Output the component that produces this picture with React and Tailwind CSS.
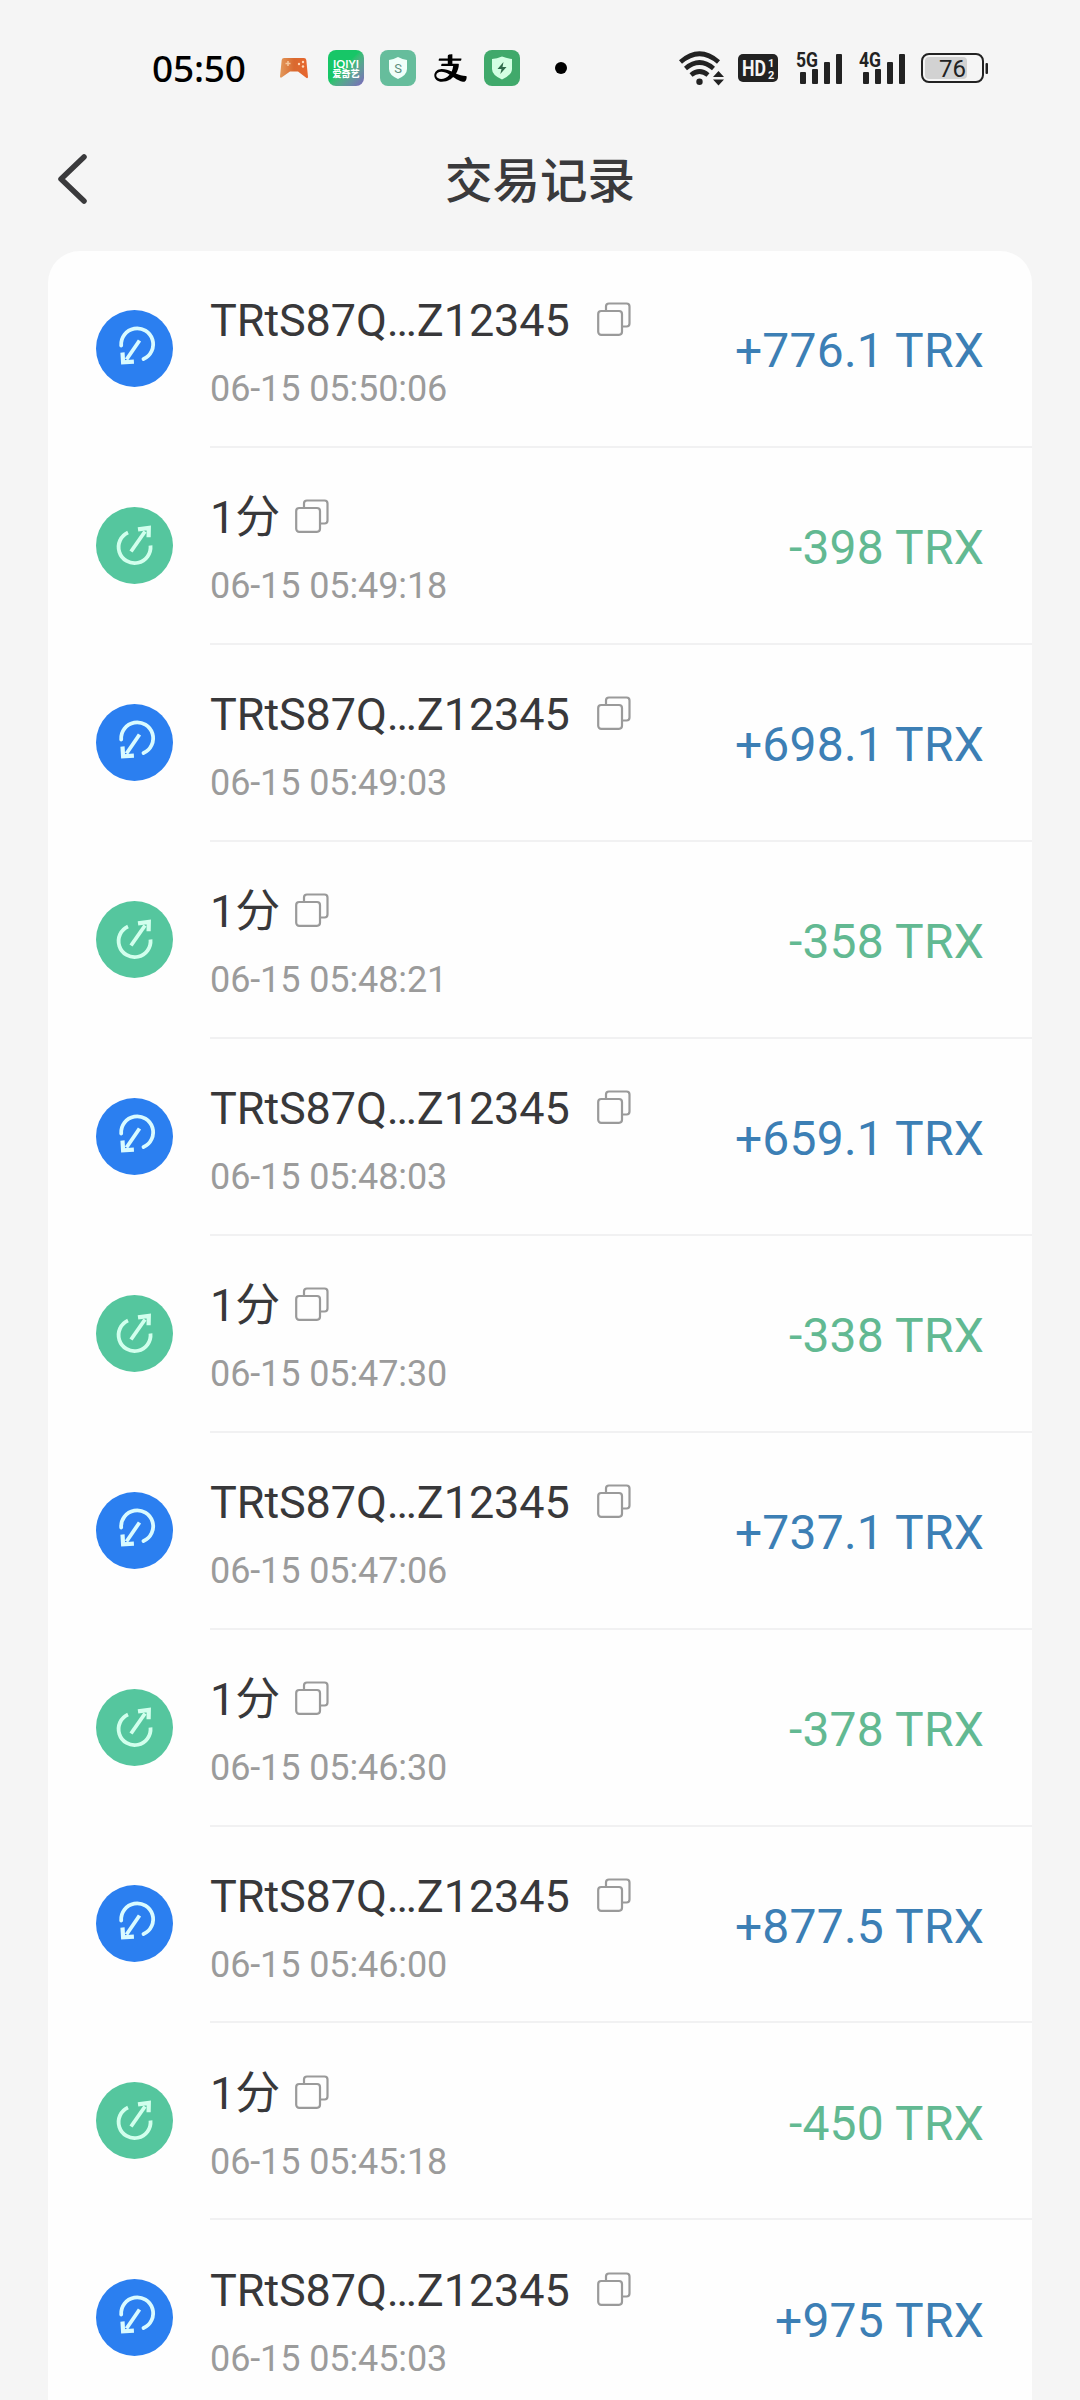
import React from 'react';
import { AiOutlineAlipay } from 'react-icons/ai';

const ADDRESS = 'TRtS87Q…Z12345';

const transactions = [
  { name: ADDRESS, time: '06-15 05:50:06', amount: '+776.1 TRX', type: 'in' },
  { name: '1分', time: '06-15 05:49:18', amount: '-398 TRX', type: 'out' },
  { name: ADDRESS, time: '06-15 05:49:03', amount: '+698.1 TRX', type: 'in' },
  { name: '1分', time: '06-15 05:48:21', amount: '-358 TRX', type: 'out' },
  { name: ADDRESS, time: '06-15 05:48:03', amount: '+659.1 TRX', type: 'in' },
  { name: '1分', time: '06-15 05:47:30', amount: '-338 TRX', type: 'out' },
  { name: ADDRESS, time: '06-15 05:47:06', amount: '+737.1 TRX', type: 'in' },
  { name: '1分', time: '06-15 05:46:30', amount: '-378 TRX', type: 'out' },
  { name: ADDRESS, time: '06-15 05:46:00', amount: '+877.5 TRX', type: 'in' },
  { name: '1分', time: '06-15 05:45:18', amount: '-450 TRX', type: 'out' },
  { name: ADDRESS, time: '06-15 05:45:03', amount: '+975 TRX', type: 'in' },
];

const GamepadIcon = () => (
  <svg width="28" height="22" viewBox="0 0 28 22" className="ml-[35px]">
    <defs>
      <linearGradient id="pad" x1="0" y1="0" x2="1" y2="0">
        <stop offset="0" stopColor="#e39a5c" />
        <stop offset="0.5" stopColor="#d9692f" />
        <stop offset="1" stopColor="#e8672f" />
      </linearGradient>
    </defs>
    <path d="M4 1h20q2 0 2.300 2L28 20q0 1.500-1.500 1L18 14.500h-8L1.500 20.500q-1.500.5-1.500-1L1.700 3Q2 1 4 1z" fill="url(#pad)" />
    <path d="M8 4v5M5.500 6.500h5" stroke="#f6c79c" strokeWidth="1.500" />
    <circle cx="19" cy="7" r="1.200" fill="#ffd9b8" />
    <circle cx="23" cy="5" r="1.200" fill="#ffd9b8" />
    <circle cx="23" cy="9.500" r="1.200" fill="#ffd9b8" />
  </svg>
);

const IqiyiIcon = () => (
  <div className="ml-[20px] flex h-9 w-9 flex-col items-center justify-center rounded-[8px] bg-linear-to-br from-[#17c667] from-45% to-[#7a63bd] text-white">
    <span className="font-['Lato'] text-[11px] leading-[11px] font-bold">IQIYI</span>
    <span className="font-['Noto_Sans_CJK_SC'] text-[9px] leading-[10px] font-black">爱奇艺</span>
  </div>
);

const ShieldMoneyIcon = () => (
  <svg width="36" height="36" viewBox="0 0 36 36" className="ml-4">
    <rect width="36" height="36" rx="8" fill="#66bd9c" />
    <path d="M18 7q4.500 2.500 9 3v9q0 6-9 10q-9-4-9-10v-9q4.500-.5 9-3z" fill="#f1fffa" />
    <text x="18" y="23" textAnchor="middle" fontSize="13" fontFamily="Roboto, sans-serif" fill="#5f8f7f">S</text>
  </svg>
);

const ShieldBoltIcon = () => (
  <svg width="36" height="36" viewBox="0 0 36 36" className="ml-[15px]">
    <rect width="36" height="36" rx="8" fill="#40a96b" />
    <path d="M18 6.500q5 2 10 2.500v10q0 6-10 10.500q-10-4.500-10-10.500v-10q5-.5 10-2.500z" fill="#d3ffe3" />
    <path d="M19.500 12l-6 7h4l-1.200 5 6.200-7h-4z" fill="#2f6b4b" />
  </svg>
);

const WifiIcon = () => (
  <svg width="45" height="35" viewBox="0 0 45 35" className="ml-[112px]">
    <g fill="none" stroke="#222" strokeWidth="4.600">
      <path d="M1.500 11Q20.500-5.500 39.500 11" />
      <path d="M6.500 17.500Q20.500 5.500 34.500 17.500" />
      <path d="M12 24Q20.500 17 29 24" />
    </g>
    <circle cx="20.500" cy="30.800" r="3.200" fill="#222" />
    <path d="M34 26l5.500-6 5.500 6zM34 28.500h11l-5.500 6z" fill="#222" />
  </svg>
);

const HdIcon = () => (
  <svg width="40" height="28" viewBox="0 0 40 28" className="ml-[14px]">
    <rect width="40" height="28" rx="5" fill="#222" />
    <g fill="#f5f5f5" fontFamily="Roboto, sans-serif" fontWeight="700">
      <text x="4" y="22" fontSize="22" textLength="24" lengthAdjust="spacingAndGlyphs">HD</text>
      <text x="30" y="12.500" fontSize="11">1</text>
      <text x="30" y="25" fontSize="11">2</text>
    </g>
  </svg>
);

const SignalIcon = ({ label, className }) => (
  <svg width="47" height="38" viewBox="0 0 47 38" className={className}>
    <text x="0" y="18" fontSize="20" fontFamily="Roboto, sans-serif" fontWeight="700" fill="#222" textLength="22" lengthAdjust="spacingAndGlyphs">{label}</text>
    <g fill="#222">
      <rect x="4" y="23" width="6" height="12" rx="1" />
      <rect x="16" y="20" width="6" height="15" rx="1" />
      <rect x="28" y="13" width="6" height="22" rx="1" />
      <rect x="40" y="5" width="6" height="30" rx="1" />
    </g>
  </svg>
);

const BatteryIcon = () => (
  <svg width="68" height="30" viewBox="0 0 68 30" className="ml-[15px]">
    <rect x="4" y="4" width="42" height="22" rx="4" fill="#d2d2d2" />
    <rect x="1" y="1" width="61" height="28" rx="7" fill="none" stroke="#222" strokeWidth="2" />
    <rect x="64.500" y="10" width="2.500" height="11" rx="1" fill="#222" />
    <text x="31.500" y="23.500" textAnchor="middle" fontSize="24" fontFamily="Roboto, sans-serif" fill="#222">76</text>
  </svg>
);

const StatusBar = () => (
  <div className="flex h-[136px] items-center pl-[152px]">
    <span className="w-[93px] font-['Noto_Sans'] text-[37px] font-medium tracking-[-0.2px] whitespace-nowrap text-black">05:50</span>
    <GamepadIcon />
    <IqiyiIcon />
    <ShieldMoneyIcon />
    <AiOutlineAlipay className="ml-[16px] h-[38px] w-[37px] text-black" />
    <ShieldBoltIcon />
    <span className="ml-[35px] h-3 w-3 rounded-full bg-black" />
    <WifiIcon />
    <HdIcon />
    <SignalIcon label="5G" className="ml-[18px]" />
    <SignalIcon label="4G" className="ml-[16px]" />
    <BatteryIcon />
  </div>
);

const Header = () => (
  <header className="grid h-[115px] grid-cols-[1fr_auto_1fr] items-start">
    <button className="mt-[16px] ml-[55px] w-fit" aria-label="返回">
      <svg width="34" height="54" viewBox="0 0 34 54" fill="none" stroke="#3a3a3c" strokeWidth="5.500" strokeLinecap="round" strokeLinejoin="round">
        <path d="M29 5L6 27l23 22" />
      </svg>
    </button>
    <h1 className="mt-[12px] font-['Noto_Sans_CJK_SC'] text-[47.5px] leading-[60px] font-medium text-[#3a3a3c]">交易记录</h1>
  </header>
);

const TypeIcon = ({ type }) =>
  type === 'in' ? (
    <svg width="77" height="77" viewBox="0 0 77 77" fill="none" className="shrink-0">
      <circle cx="38.500" cy="38.500" r="38.500" fill="#2b7ff0" />
      <g stroke="#d9fbff" strokeWidth="3.800">
        <path d="M25.200 35.500A16 16 0 1 1 47.500 49" strokeLinecap="round" />
        <path d="M43.500 30.500L30.500 49.500" />
        <path d="M26.500 42.500l.6 9.800 10.800-.6" strokeWidth="4.200" />
      </g>
    </svg>
  ) : (
    <svg width="77" height="77" viewBox="0 0 77 77" fill="none" className="shrink-0">
      <circle cx="38.500" cy="38.500" r="38.500" fill="#55c69e" />
      <g stroke="#d2ffed" strokeWidth="3.800">
        <path d="M32 25.500A16 16 0 1 0 54.500 38.500" />
        <path d="M35 44.500L49 24.500" />
        <path d="M42 22.300l10.800-1.500-.2 9.500" strokeWidth="4.200" />
      </g>
    </svg>
  );

const CopyIcon = () => (
  <svg width="34" height="34" viewBox="0 0 34 34" fill="none" stroke="#9a9a9a" strokeWidth="2.200">
    <path d="M9 9V4.500Q9 1.500 12 1.500h17.500q3 0 3 3V21.500q0 3-3 3H25" />
    <rect x="1.200" y="9" width="23.800" height="23.800" rx="3" />
  </svg>
);

const TransactionRow = ({ item }) => {
  const incoming = item.type === 'in';

  return (
    <li className="group flex h-[196.950px] items-stretch pl-12">
      <div className="flex items-center pb-[2px]">
        <TypeIcon type={item.type} />
      </div>
      <div className="ml-[37px] flex flex-1 items-center justify-between border-b-2 border-[#f1f1f2] pr-[48px] group-last:border-0">
        <div className="pt-[10px] group-last:pt-[8px]">
          <div className="flex h-[56px] items-center">
            <span className="font-['Roboto','Noto_Sans_CJK_SC',sans-serif] text-[45px] leading-[56px] tracking-[-0.1px] whitespace-nowrap text-[#38383a]">{item.name}</span>
            <span className={incoming ? 'mb-[4px] ml-[27px]' : 'mb-[4px] ml-[15px]'}>
              <CopyIcon />
            </span>
          </div>
          <p className="mt-[16px] font-['Roboto'] text-[36px] leading-[48px] tracking-[-0.1px] text-[#9b9b9b]">{item.time}</p>
        </div>
        <span className={`pt-[6px] font-['Roboto'] text-[48px] leading-[56px] tracking-[0.2px] whitespace-nowrap group-last:pt-[4px] ${incoming ? 'text-[#3c7fb5]' : 'text-[#62b992]'}`}>
          {item.amount}
        </span>
      </div>
    </li>
  );
};

const App = () => {
  return (
    <div className="h-[2400px] w-[1080px] overflow-hidden bg-[#f5f5f5]">
      <StatusBar />
      <Header />
      <ul className="mx-12 rounded-t-[32px] bg-[#fefefe]">
        {transactions.map((item) => (
          <TransactionRow key={item.time} item={item} />
        ))}
      </ul>
    </div>
  );
};

export default App;
